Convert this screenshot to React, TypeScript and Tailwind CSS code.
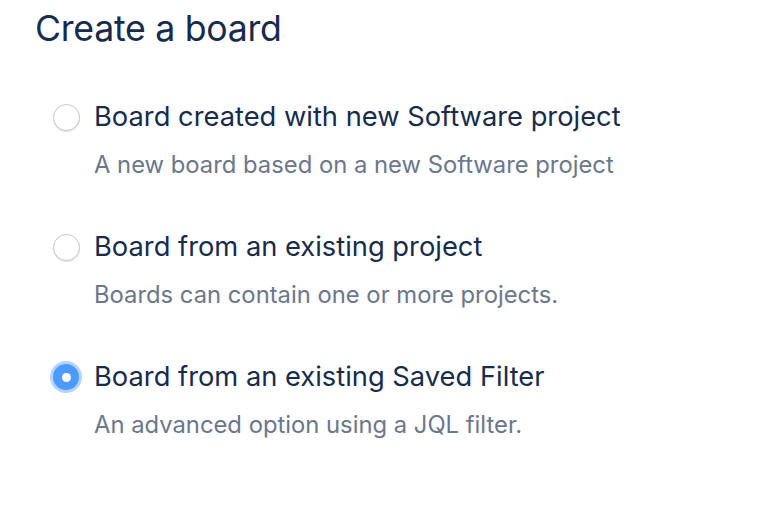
import React, { useState } from 'react';

// ─────────────────────────────────────────────
// Options
// ─────────────────────────────────────────────
const OPTIONS = [
  {
    id: 'new',
    label: 'Board created with new Software project',
    hint: 'A new board based on a new Software project',
  },
  {
    id: 'project',
    label: 'Board from an existing project',
    hint: 'Boards can contain one or more projects.',
  },
  {
    id: 'filter',
    label: 'Board from an existing Saved Filter',
    hint: 'An advanced option using a JQL filter.',
  },
];

const Radio = ({ checked }: { checked: boolean }) =>
  checked ? (
    <span className="flex h-[32px] w-[32px] shrink-0 items-center justify-center rounded-full bg-[#B3D4FF]">
      <span className="flex h-[26px] w-[26px] items-center justify-center rounded-full bg-[#4C9AFF]">
        <span className="h-[9px] w-[9px] rounded-full bg-white" />
      </span>
    </span>
  ) : (
    <span className="flex h-[32px] w-[32px] shrink-0 items-center justify-center">
      <span className="h-[27px] w-[27px] rounded-full border-[1.5px] border-[#C6C9CE] bg-white shadow-[0_1px_1px_rgba(0,0,0,0.12)]" />
    </span>
  );

export default function App() {
  const [selected, setSelected] = useState('filter');

  return (
    <div
      className="h-[526px] w-[770px] bg-white pl-[35px] pt-[6px] text-[#172B4D]"
      style={{ fontFamily: 'Inter, "Noto Sans", sans-serif' }}
    >
      <h1 className="text-[35.7px] leading-[44px] font-normal tracking-[-0.3px]">Create a board</h1>

      <div className="mt-[51px] flex flex-col gap-[51px] pl-[15px]">
        {OPTIONS.map((o) => (
          <label
            key={o.id}
            className="flex cursor-pointer items-start gap-[12px]"
            onClick={() => setSelected(o.id)}
          >
            <Radio checked={selected === o.id} />
            <div className="flex flex-col">
              <span className="text-[27.3px] leading-[32px]">{o.label}</span>
              <span className="mt-[17px] text-[23.8px] leading-[30px] text-[#6B778C]">{o.hint}</span>
            </div>
          </label>
        ))}
      </div>
    </div>
  );
}
